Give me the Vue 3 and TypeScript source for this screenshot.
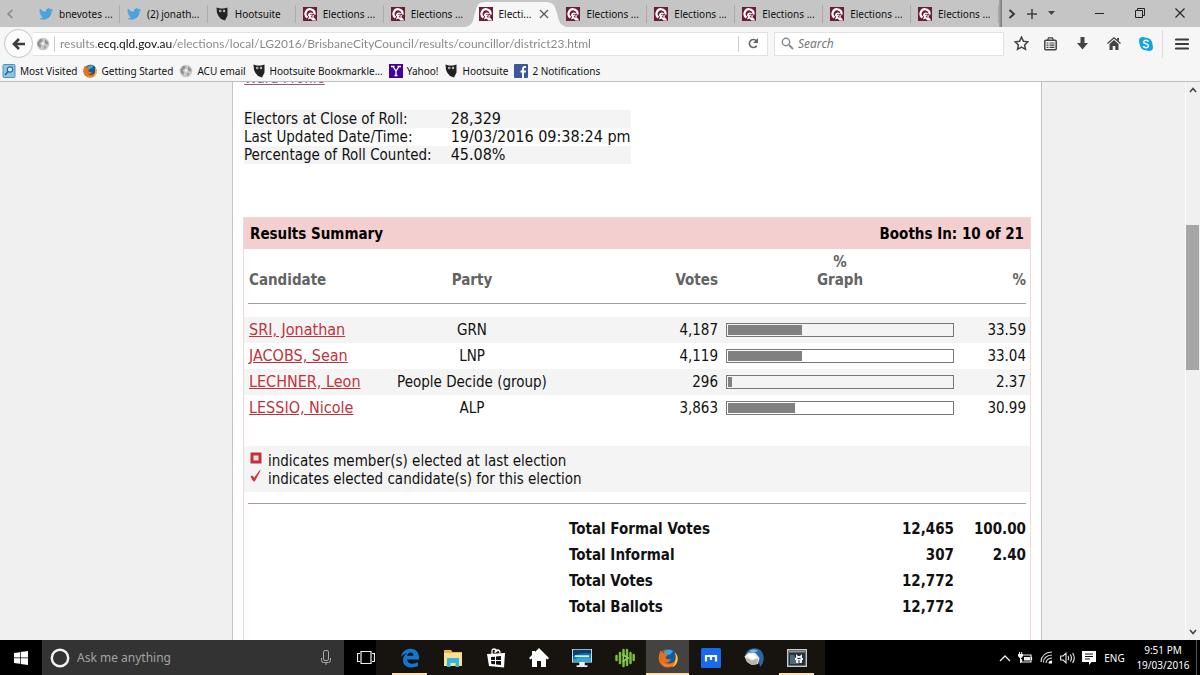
<script setup lang="ts">
import { ref } from 'vue'

interface Tab { title: string; icon: string; active?: boolean }
interface Bookmark { title: string; icon: string }
interface Candidate { name: string; party: string; votes: string; percent: number }
interface Total { label: string; votes: string; percent: string }
interface TaskApp { name: string; icon: string; running?: boolean; focused?: boolean }

const tabs: Tab[] = [
  { title: 'bnevotes ...', icon: 'twitter' },
  { title: '(2) jonath...', icon: 'twitter' },
  { title: 'Hootsuite', icon: 'owl' },
  { title: 'Elections ...', icon: 'ecq' },
  { title: 'Elections ...', icon: 'ecq' },
  { title: 'Electi...', icon: 'ecq', active: true },
  { title: 'Elections ...', icon: 'ecq' },
  { title: 'Elections ...', icon: 'ecq' },
  { title: 'Elections ...', icon: 'ecq' },
  { title: 'Elections ...', icon: 'ecq' },
  { title: 'Elections ...', icon: 'ecq' },
]

const bookmarks: Bookmark[] = [
  { title: 'Most Visited', icon: 'visited' },
  { title: 'Getting Started', icon: 'firefox' },
  { title: 'ACU email', icon: 'globe' },
  { title: 'Hootsuite Bookmarkle...', icon: 'owl' },
  { title: 'Yahoo!', icon: 'yahoo' },
  { title: 'Hootsuite', icon: 'owl' },
  { title: '2 Notifications', icon: 'facebook' },
]

const rollInfo: [string, string][] = [
  ['Electors at Close of Roll:', '28,329'],
  ['Last Updated Date/Time:', '19/03/2016 09:38:24 pm'],
  ['Percentage of Roll Counted:', '45.08%'],
]

const candidates: Candidate[] = [
  { name: 'SRI, Jonathan', party: 'GRN', votes: '4,187', percent: 33.59 },
  { name: 'JACOBS, Sean', party: 'LNP', votes: '4,119', percent: 33.04 },
  { name: 'LECHNER, Leon', party: 'People Decide (group)', votes: '296', percent: 2.37 },
  { name: 'LESSIO, Nicole', party: 'ALP', votes: '3,863', percent: 30.99 },
]

const totals: Total[] = [
  { label: 'Total Formal Votes', votes: '12,465', percent: '100.00' },
  { label: 'Total Informal', votes: '307', percent: '2.40' },
  { label: 'Total Votes', votes: '12,772', percent: '' },
  { label: 'Total Ballots', votes: '12,772', percent: '' },
]

const apps: TaskApp[] = [
  { name: 'Microsoft Edge', icon: 'edge', running: true },
  { name: 'File Explorer', icon: 'folder' },
  { name: 'Store', icon: 'store' },
  { name: 'Home', icon: 'house' },
  { name: 'Lenovo', icon: 'monitor' },
  { name: 'Audio', icon: 'wave' },
  { name: 'Firefox', icon: 'firefox', running: true, focused: true },
  { name: 'Maxthon', icon: 'maxthon' },
  { name: 'Thunderbird', icon: 'thunderbird' },
  { name: 'Viewer', icon: 'viewer', running: true },
]

const url = ref('results.ecq.qld.gov.au/elections/local/LG2016/BrisbaneCityCouncil/results/councillor/district23.html')
const query = ref('')
const ask = ref('')
const barWidth = (percent: number): string => `${Math.floor(percent)}%`
</script>

<template>
  <div class="desktop">
    <svg class="sprite" aria-hidden="true">
      <symbol id="twitter" viewBox="0 0 24 24">
        <path fill="#4aa3df" d="M24 4.6a10 10 0 0 1-2.8.8 5 5 0 0 0 2.1-2.7 10 10 0 0 1-3.1 1.2A4.9 4.9 0 0 0 11.800 8.400 14 14 0 0 1 1.700 3.200a4.900 4.900 0 0 0 1.500 6.600 5 5 0 0 1-2.200-.6c0 2.300 1.600 4.400 3.900 4.900a5 5 0 0 1-2.200.1 4.900 4.900 0 0 0 4.600 3.400A9.900 9.900 0 0 1 0 19.500 14 14 0 0 0 21.500 7.100 10 10 0 0 0 24 4.600z" />
      </symbol>
      <symbol id="owl" viewBox="0 0 14 14">
        <path fill="#222" d="M1.500.5 5 1.500h4l3.500-1V8.500L10 13.500 6 12 3.500 9 2 6z" />
        <circle cx="5.300" cy="4" r="1.200" fill="#ddd" /><circle cx="9" cy="4" r="1.200" fill="#ddd" />
        <circle cx="5.500" cy="4" r=".5" fill="#222" /><circle cx="8.900" cy="4" r=".5" fill="#222" />
      </symbol>
      <symbol id="ecq" viewBox="0 0 14 14">
        <rect width="14" height="14" fill="#6f1a35" />
        <path fill="none" stroke="#fff" stroke-width="2.200" d="M4.500 10.500A4.500 4.500 0 1 1 11.500 7.500" />
        <path fill="#fff" d="M5 8.500C5 5.500 8 4.800 10 6.300l-1 1.700 2.500.5-1 1.500 3 3.500H9.500L7.500 11.500 5 12.500l1-3z" />
        <path fill="none" stroke="#6f1a35" stroke-width=".8" d="M7 7.500q2-1 2.500.5L8 10h2.500" />
      </symbol>
      <symbol id="globe" viewBox="0 0 14 14">
        <circle cx="7" cy="7" r="6.300" fill="#c9c9c9" />
        <path fill="#929292" d="M4 2l3 .5-1 2-2.500 2L5 8l-.5 3L2 9 1.200 6zM9 2.500l2.500 2L12.500 7l-2 .5L9 6zM8 9l2.500.5L8.500 12.500z" />
        <path fill="#f4f4f4" d="M6.500 5 8.500 6 7.500 8 5.500 7z" />
      </symbol>
      <symbol id="visited" viewBox="0 0 14 14">
        <rect x="1" y=".5" width="12" height="13" rx="1" fill="#8fc4e8" stroke="#4c94c2" />
        <circle cx="8" cy="5.500" r="2.700" fill="#d9f0fc" stroke="#276c9f" stroke-width="1.200" />
        <path d="M6 7.500 3 11" stroke="#276c9f" stroke-width="1.600" />
      </symbol>
      <symbol id="firefox" viewBox="0 0 20 20">
        <circle cx="10" cy="10.300" r="9.400" fill="#e4601a" />
        <circle cx="11" cy="8.300" r="7.300" fill="#145a9e" />
        <path fill="#39a9dc" d="M5.500 4Q10 0 15 3L12.500 6.500 8 7z" />
        <path fill="#e8701d" d="M1 7 2.500 2.500 5 5 8 5.500 9.500 7.500 7.500 9 8.500 11 11.500 11.500 13 11c-1 3-4 4-6.500 3 3 3.500 9 2.500 11-2 1-2.500.5-5-.5-7.500C21 8 20 15 16 18L6 18.500 1 13z" />
        <path fill="#ffc23a" d="M17 4.500c3 3 3.500 7.500 1.500 11-1.200 2-2.700 3.200-4.500 3.800C17.500 15.500 18.500 10 17 4.500z" />
        <path fill="#f79a2c" d="M3 13c3 5 9 5.500 13 2-2 4-10 5.500-13-2z" />
      </symbol>
      <symbol id="yahoo" viewBox="0 0 14 14">
        <rect width="14" height="14" fill="#440099" />
        <path d="M2 2.500h3.500M8.500 2.500H12M4 2.500 7 7l3-4.500M7 7v4.500M5.500 11.500h3" fill="none" stroke="#fff" stroke-width="1.300" />
      </symbol>
      <symbol id="facebook" viewBox="0 0 14 14">
        <rect width="14" height="14" rx="1" fill="#3b5998" />
        <path d="M12 3H10.500Q9 3 9 5v9M6.500 7.500H12" fill="none" stroke="#fff" stroke-width="1.900" />
      </symbol>
      <symbol id="edge" viewBox="0 0 20 20">
        <path fill="#0f78d4" d="M1 9C2 3.500 6 .8 10.500.8 16 .8 19 4.500 19 9.500v2H7c.3 3 3 4.200 5.500 4.200 2 0 4-.6 5.500-1.600v4c-2 1-4.300 1.400-6.500 1.400C6 19.500 3 16.500 3 12.200c0-3 1.500-5.500 4.200-7C4.500 5.700 2.300 7 1 9zm6.200-1.300h6.200c0-2-1-3.200-2.900-3.200-1.800 0-3 1.200-3.300 3.200z" />
      </symbol>
      <symbol id="folder" viewBox="0 0 20 20">
        <path fill="#e8b84a" d="M1 2h7l1.500 2H19v14H1z" /><path fill="#fbe08f" d="M1 5h18v13H1z" />
        <path fill="#35b5e5" d="M4 10h12v9h-3.500v-4h-5v4H4z" />
      </symbol>
      <symbol id="store" viewBox="0 0 20 20">
        <path fill="none" stroke="#fff" stroke-width="1.300" d="M6 6V3q0-2 2-2t3 3M9 5q0-3 2.500-3T14 5" />
        <path fill="#fff" d="M1 6l18-1-1 14.500L3 18z" />
        <path fill="#111" d="M5 9l4-.3V12H5zM10 8.500l5-.4V12h-5zM5 13h4v3.300L5.300 16zM10 13h5v4l-5-.5z" />
      </symbol>
      <symbol id="house" viewBox="0 0 20 20">
        <path fill="#fff" d="M10 0l10 10-1.500 1.500L17 10.500V19h-5v-6H8v6H3v-8.500l-1.500 1L0 10l3-3V3h3v1z" />
      </symbol>
      <symbol id="monitor" viewBox="0 0 22 20">
        <path fill="#e7eef3" d="M0 0h22v15H0zM8 15h6v3H8zM5 18h12v2H5z" />
        <path fill="#0873ae" d="M1 1h20v13H1z" /><path fill="#0b3f69" d="M1 1h20v4Q10 3 1 8z" />
        <path fill="#d8effa" d="M3 7h16v2H3z" /><path fill="#38a4d3" d="M1 12q10-5 20-2v4H1z" />
      </symbol>
      <symbol id="wave" viewBox="0 0 20 20">
        <path fill="none" stroke="#79bd42" stroke-width="2.500" stroke-linecap="round" d="M1.500 8v4M5 5v10M8.500 2v5M8.500 13v5M12 2v6M12 12v5M15.500 5v10M18.700 7v5" />
        <path fill="#8bd34e" d="M7.500 5.500l7.500 4.500-7.500 4.500z" /><path fill="#182412" d="M9 8.500 11.500 10 9 11.500z" />
      </symbol>
      <symbol id="maxthon" viewBox="0 0 20 20">
        <rect width="20" height="20" rx="1.500" fill="#1769ed" />
        <path fill="none" stroke="#fff" stroke-width="2.200" d="M5 13.500V8h10v5.500M10 8v4" />
      </symbol>
      <symbol id="thunderbird" viewBox="0 0 20 20">
        <path fill="#2866a6" d="M3 3.500C7-1 15-.5 18 4c3 5 2 11-2 15 0-3-1-5-3-7L4 9 1 7z" />
        <path fill="#7fb8e2" d="M5 3c3-2 7-2 9 0L9 5z" />
        <path fill="#e9e7e3" d="M.5 8.500l4-4 7 .5 4 5-1.500 6-6 1-5-3z" /><path fill="#b8b5ae" d="M2 9.500l6 3 6-2-1 5.500-5 1-5-3z" />
        <path fill="#fff" d="M3 7.500l5-2 5 4-5 2z" />
      </symbol>
      <symbol id="viewer" viewBox="0 0 20 20">
        <rect x=".7" y="1.700" width="18.600" height="16.600" fill="#263238" stroke="#c9cdd0" stroke-width="1.400" />
        <path fill="#8a9499" d="M2 3h16v1.500H2z" /><path fill="#516a76" d="M3 7h4l5 9H3z" />
        <path fill="#e9edef" d="M9 6l2 2h2l2-2v4h1v2h-1v3H9v-3H8v-2h1z" /><path fill="#263238" d="M10.500 10h3v1h-3zM11.500 12h1v3h-1z" />
      </symbol>
    </svg>

    <header class="browser">
      <div class="tabbar">
        <button class="tab-scroll" aria-label="Scroll tabs left">
          <svg width="8" height="10" viewBox="0 0 8 10"><path d="M6.500 1 2 5l4.500 4" fill="none" stroke="#888" stroke-width="1.600" /></svg>
        </button>
        <nav class="tabs" aria-label="Tabs">
          <div v-for="(tab, i) in tabs" :key="i" class="tab" :class="{ active: tab.active }">
            <svg v-if="tab.active" class="tab-shape" viewBox="0 0 104 27" preserveAspectRatio="none">
              <path fill="#f6f6f6" d="M0 27C9 26 9 21 11 13S14 2 22 2h60c8 0 9 4 11 11s2 13 11 14z" />
            </svg>
            <button class="tab-title">
              <svg class="icon14"><use :href="'#' + tab.icon" /></svg>
              <span>{{ tab.title }}</span>
            </button>
            <button v-if="tab.active" class="tab-close" aria-label="Close tab">
              <svg width="10" height="10" viewBox="0 0 10 10"><path d="M1 1l8 8M9 1 1 9" stroke="#555" stroke-width="1.200" /></svg>
            </button>
          </div>
        </nav>
        <span class="tab-edge"></span>
        <div class="tab-tools">
          <button aria-label="Scroll tabs right"><svg width="8" height="10" viewBox="0 0 8 10"><path d="M1.500 1 6 5 1.500 9" fill="none" stroke="#333" stroke-width="1.800" /></svg></button>
          <button aria-label="New tab"><svg width="12" height="12" viewBox="0 0 12 12"><path d="M6 1v10M1 6h10" stroke="#444" stroke-width="1.600" /></svg></button>
          <button aria-label="List all tabs"><svg width="8" height="5" viewBox="0 0 8 5"><path d="M0 0h7L3.500 4z" fill="#444" /></svg></button>
        </div>
        <div class="window-tools">
          <button aria-label="Minimise"><svg width="10" height="10" viewBox="0 0 10 10"><path d="M0 5.500h9" stroke="#222" /></svg></button>
          <button aria-label="Restore"><svg width="10" height="10" viewBox="0 0 10 10"><path d="M.5 2.500h7v7h-7zM2.500 2V.5h7v7H8" fill="none" stroke="#222" /></svg></button>
          <button aria-label="Close"><svg width="10" height="10" viewBox="0 0 10 10"><path d="M.5.5l9 9M9.500.5l-9 9" stroke="#222" stroke-width="1.100" /></svg></button>
        </div>
      </div>

      <div class="toolbar">
        <button class="back" aria-label="Back">
          <svg width="14" height="12" viewBox="0 0 14 12"><path d="M7 1 2 6l5 5M2.500 6H13" fill="none" stroke="#3c3c3c" stroke-width="2.600" /></svg>
        </button>
        <div class="address">
          <svg class="icon14"><use href="#globe" /></svg>
          <input v-model="url" class="url" type="text" aria-label="Address" />
          <button class="reload" aria-label="Reload">
            <svg width="11" height="11" viewBox="0 0 11 11"><path d="M8.700 7.800A4 4 0 1 1 8.500 3" fill="none" stroke="#666" stroke-width="1.600" /><path d="M10 0v5H5z" fill="#666" /></svg>
          </button>
        </div>
        <div class="search">
          <svg width="13" height="13" viewBox="0 0 13 13"><circle cx="5" cy="5" r="3.700" fill="none" stroke="#888" stroke-width="1.400" /><path d="M8 8l4 4" stroke="#888" stroke-width="1.800" /></svg>
          <input v-model="query" type="text" placeholder="Search" aria-label="Search" />
        </div>
        <div class="tools">
          <button class="narrow" aria-label="Bookmark"><svg width="15" height="15" viewBox="0 0 14 14"><path d="M7 1l1.800 3.900 4.200.5-3.100 2.900.8 4.200L7 10.400l-3.700 2.100.8-4.200L1 5.400l4.200-.5z" fill="none" stroke="#444" stroke-width="1.400" /></svg></button>
          <button class="clip" aria-label="Bookmarks list"><svg width="13" height="14" viewBox="0 0 13 14"><rect x=".8" y="3.300" width="11.400" height="9.400" rx="1" fill="none" stroke="#444" stroke-width="1.500" /><path d="M3.700 3.300 4.500.8h4l.8 2.500" fill="none" stroke="#444" stroke-width="1.300" /><path d="M2.500 6h2M5.500 6h5M2.500 8.200h2M5.500 8.200h5M2.500 10.400h2M5.500 10.400h5" stroke="#444" stroke-width="1.200" /></svg></button>
          <button aria-label="Downloads"><svg width="13" height="13" viewBox="0 0 13 13"><path d="M4.500 0h4v6H12l-5.500 6.500L1 6h3.500z" fill="#444" /></svg></button>
          <button aria-label="Home"><svg width="14" height="13" viewBox="0 0 14 13"><path d="M.5 6.500 7 .8l6.500 5.700" fill="none" stroke="#444" stroke-width="1.300" /><path d="M2.500 7 7 3l4.500 4v6H8.300V9H5.700v4H2.500zM10 1h2v3l-2-1.500z" fill="#444" /></svg></button>
          <button aria-label="Skype"><svg width="14" height="14" viewBox="0 0 14 14"><circle cx="7" cy="7" r="6.300" fill="#10a5e6" /><circle cx="4" cy="4" r="4" fill="#10a5e6" /><circle cx="10" cy="10" r="4" fill="#10a5e6" /><path d="M9.500 4.700Q8.800 3.300 7 3.300T4.700 5Q4.700 6.400 7 6.800T9.500 9Q9.300 10.700 7 10.700T4.400 9" fill="none" stroke="#fff" stroke-width="1.500" /></svg></button>
          <button class="menu" aria-label="Menu"><svg width="14" height="12" viewBox="0 0 14 12"><path d="M1 1.500h12M1 6h12M1 10.500h12" stroke="#3c3c3c" stroke-width="2.200" stroke-linecap="round" /></svg></button>
        </div>
      </div>

      <nav class="bookmarks" aria-label="Bookmarks">
        <a v-for="(mark, i) in bookmarks" :key="i" href="#">
          <svg class="icon14"><use :href="'#' + mark.icon" /></svg>
          <span>{{ mark.title }}</span>
        </a>
      </nav>
    </header>

    <div class="viewport">
      <main class="sheet">
        <div class="sheet-body">
          <a class="ward" href="#">Ward Profile</a>

          <table class="roll">
            <tbody>
              <tr v-for="[label, value] in rollInfo" :key="label">
                <th scope="row">{{ label }}</th>
                <td>{{ value }}</td>
              </tr>
            </tbody>
          </table>

          <section class="results">
            <header class="results-head">
              <h2>Results Summary</h2>
              <strong>Booths In: 10 of 21</strong>
            </header>
            <table class="candidates">
              <colgroup><col class="c-name" /><col class="c-party" /><col class="c-votes" /><col class="c-graph" /><col class="c-pct" /></colgroup>
              <thead>
                <tr><th class="left">Candidate</th><th>Party</th><th class="right">Votes</th><th>%<br />Graph</th><th class="right">%</th></tr>
              </thead>
              <tbody>
                <tr class="rule"><td colspan="5"><hr /></td></tr>
                <tr v-for="person in candidates" :key="person.name" class="person">
                  <td class="left"><a href="#">{{ person.name }}</a></td>
                  <td class="center">{{ person.party }}</td>
                  <td class="right">{{ person.votes }}</td>
                  <td><div class="bar"><div class="fill" :style="{ width: barWidth(person.percent) }"></div></div></td>
                  <td class="right">{{ person.percent.toFixed(2) }}</td>
                </tr>
              </tbody>
            </table>
            <div class="legend">
              <p><svg width="12" height="12" viewBox="0 0 12 12"><rect x="2" y="2" width="8" height="8" fill="#f7dede" stroke="#c1323c" stroke-width="3" /></svg>indicates member(s) elected at last election</p>
              <p><svg width="12" height="12" viewBox="0 0 12 12"><path d="M1 6.500 2.500 6 4 8.500 10 .5 4.500 11H3.500z" fill="#d0323e" stroke="#d0323e" /></svg>indicates elected candidate(s) for this election</p>
            </div>
            <hr class="divider" />
            <table class="totals">
              <colgroup><col /><col class="t-label" /><col class="t-votes" /><col class="c-pct" /></colgroup>
              <tbody>
                <tr v-for="total in totals" :key="total.label">
                  <td></td>
                  <th scope="row">{{ total.label }}</th>
                  <td>{{ total.votes }}</td>
                  <td>{{ total.percent }}</td>
                </tr>
              </tbody>
            </table>
          </section>
        </div>
      </main>
      <div class="scrollbar">
        <button aria-label="Scroll up"><svg width="8" height="6" viewBox="0 0 8 6"><path d="M1 5l3-3.500L7 5" fill="none" stroke="#444" stroke-width="1.600" /></svg></button>
        <div class="track"><span class="gap"></span><span class="thumb"></span><span class="rest"></span></div>
        <button aria-label="Scroll down"><svg width="8" height="6" viewBox="0 0 8 6"><path d="M1 1l3 3.500L7 1" fill="none" stroke="#444" stroke-width="1.600" /></svg></button>
      </div>
    </div>

    <footer class="taskbar">
      <button class="start" aria-label="Start">
        <svg width="14" height="14" viewBox="0 0 14 14"><path fill="#fff" d="M0 2l6-.8v5.400H0zM6.700 1.100 14 0v6.600H6.700zM0 7.300h6v5.400L0 12zM6.700 7.300H14V14l-7.300-1.100z" /></svg>
      </button>
      <div class="cortana">
        <svg width="20" height="20" viewBox="0 0 20 20"><circle cx="10" cy="10" r="8.200" fill="none" stroke="#f4f4f4" stroke-width="2.400" /></svg>
        <input v-model="ask" type="text" placeholder="Ask me anything" aria-label="Ask me anything" />
        <button aria-label="Voice"><svg width="12" height="16" viewBox="0 0 12 16"><rect x="3.500" y=".5" width="5" height="10" rx="1.500" fill="none" stroke="#aaa" /><path d="M1.500 8v2.500q0 2 2 2h5q2 0 2-2V8M6 12.500V15" fill="none" stroke="#aaa" /></svg></button>
      </div>
      <button class="taskview" aria-label="Task view">
        <svg width="18" height="13" viewBox="0 0 18 13"><path d="M4 .5h10v12H4zM3 2.500H.5v8H3M15 2.500h2.500v8H15" fill="none" stroke="#eee" stroke-width="1.200" /></svg>
      </button>
      <div class="apps">
        <button v-for="app in apps" :key="app.name" :class="{ running: app.running, focused: app.focused }" :aria-label="app.name">
          <svg class="icon20"><use :href="'#' + app.icon" /></svg>
        </button>
      </div>
      <div class="tray">
        <button aria-label="Show hidden icons"><svg width="12" height="8" viewBox="0 0 12 8"><path d="M1 7l5-5 5 5" fill="none" stroke="#eee" stroke-width="1.300" /></svg></button>
        <button aria-label="Power"><svg width="15" height="12" viewBox="0 0 15 12"><path d="M5 3h8v7H3.500V7M13.500 5v3" fill="none" stroke="#eee" stroke-width="1.200" /><path d="M6 5h6v3.500H6zM0 2h5v2L3.500 6H1.500L0 4zM1 0h1v2H1zM3.200 0h1v2h-1zM2 6h1v5H2z" fill="#eee" /></svg></button>
        <button aria-label="Network"><svg width="13" height="13" viewBox="0 0 13 13"><path d="M1 11Q1.500 1.500 12 1M3.300 11.500Q4 4.500 12 4M6 12Q6.500 7.300 12 7" fill="none" stroke="#ddd" stroke-width="1.200" /><path d="M8.500 12.500Q8.500 9.500 12 9.500v3z" fill="#fff" /></svg></button>
        <button aria-label="Volume"><svg width="16" height="12" viewBox="0 0 16 12"><path d="M.6 4h2.500L6 1.200v9.600L3.100 8H.6zM8 4q1.300 2 0 4M10.300 2.500q2.300 3.500 0 7M12.600 1q3.300 5 0 10" fill="none" stroke="#eee" stroke-width="1.100" /></svg></button>
        <button aria-label="Notifications"><svg width="14" height="14" viewBox="0 0 14 14"><path d="M0 0h14v11H9.500L7 14v-3H0z" fill="#fff" /><path d="M3 3h8M3 5.500h8M3 8h5" stroke="#111" /></svg></button>
        <button class="lang">ENG</button>
        <button class="clock"><time>9:51 PM</time><span>19/03/2016</span></button>
        <span class="show-desktop"></span>
      </div>
    </footer>
  </div>
</template>

<style>
html, body { margin: 0; overflow: hidden; }
</style>

<style scoped>
* { box-sizing: border-box; }
.desktop { display: flex; flex-direction: column; height: 100vh; background: #f0f0f0; font: 10px/16px "Noto Sans", "Open Sans", sans-serif; color: #111; }
.sprite { display: none; }
button { border: 0; padding: 0; margin: 0; background: none; font: inherit; color: inherit; display: flex; align-items: center; justify-content: center; }
input { border: 0; padding: 0; margin: 0; background: none; outline: 0; font: inherit; min-width: 0; }
.icon14 { width: 14px; height: 14px; flex: none; }
.icon20 { width: 20px; height: 20px; flex: none; }

.browser { flex: none; background: #f6f6f6; border-bottom: 1px solid #bcbcbc; }
.tabbar { display: flex; height: 27px; background: #c5c5c5; }
.tab-scroll { width: 19px; margin-right: 13px; }
.tabs { display: flex; flex: 1; min-width: 0; }
.tab { position: relative; display: flex; flex: 1; min-width: 0; align-items: center; padding-left: 7px; }
.tab:not(.active)::after { content: ""; position: absolute; right: 0; top: 5px; bottom: 4px; width: 1px; background: #aaa; }
.tab:has(+ .active)::after { display: none; }
.tab-title { position: relative; gap: 6px; white-space: nowrap; }
.tab-shape { position: absolute; left: -8px; top: 0; width: calc(100% + 16px); height: 27px; }
.tab-close { position: relative; margin: 0 10px 0 auto; }
.tab-edge { width: 3px; background: linear-gradient(90deg, #aaa, #777); }
.tab-tools { display: flex; }
.tab-tools button { width: 20px; }
.window-tools { display: flex; margin-left: 18px; }
.window-tools button { width: 40px; padding-bottom: 2px; }

.toolbar { display: flex; align-items: center; height: 33px; padding-left: 4px; }
.back { width: 29px; height: 29px; border: 1px solid #c4c4c4; border-radius: 50%; background: #fcfcfc; }
.address { display: flex; flex: 1; align-items: center; height: 24px; background: #fff; border: 1px solid #e2e2e2; border-left: 0; padding-left: 3px; }
.url { flex: 1; margin-left: 4px; padding-left: 5px; height: 16px; border-left: 1px solid #ccc; font: 12px/16px Lato, "Open Sans", sans-serif; color: transparent; background: linear-gradient(90deg, #858585 42px, #111 42px 117px, #858585 117px); background-clip: text; -webkit-background-clip: text; }
.reload { width: 29px; height: 16px; border-left: 1px solid #ccc; }
.search { display: flex; flex: 0 1 230px; align-items: center; gap: 4px; height: 24px; margin-left: 6px; padding-left: 6px; background: #fff; border: 1px solid #e2e2e2; }
.search input { flex: 1; font: italic 12px/16px "Noto Sans", sans-serif; }
.search input::placeholder { color: #777; opacity: 1; }
.tools { display: flex; align-items: center; margin-left: 4px; }
.tools button { width: 32px; height: 28px; }
.tools .narrow { width: 27px; }
.tools .clip { width: 31px; }
.tools .menu { width: 38px; border-left: 1px solid #dcdcdc; }

.bookmarks { display: flex; align-items: center; gap: 6px; height: 21px; padding-left: 2px; }
.bookmarks a { display: flex; align-items: center; gap: 4px; color: #111; text-decoration: none; white-space: nowrap; }

.viewport { display: flex; flex: 1; min-height: 0; overflow: hidden; }
.sheet { flex: 1; margin: 0 143px 0 232px; background: #fff; border: solid #c4c4c4; border-width: 0 1px; min-width: 0; }
.sheet-body { margin-top: -13px; padding: 0 10px; font: 15px/18px "DejaVu Sans Condensed", "DejaVu Sans", sans-serif; color: #111; }
.ward { display: block; width: max-content; margin-left: 1px; color: #8d5a80; }
.roll { margin: 23px 0 0 1px; border-collapse: collapse; }
.roll th { padding: 0 19px 0 0; text-align: left; font-weight: 400; }
.roll td { padding: 0; font-size: 16px; }
.roll tr:nth-child(odd) { background: #f4f4f4; }
.results { margin-top: 53px; border: 1px solid #f4d8d8; border-bottom: 0; height: 440px; }
.results-head { display: flex; align-items: center; justify-content: space-between; height: 31px; padding: 0 6px; background: #f4cfcf; color: #000; }
h2, .results-head strong { margin: 0; font-size: 15px; font-weight: 700; }
table.candidates, .totals { width: 100%; table-layout: fixed; border-collapse: collapse; }
.candidates th, .candidates td { padding: 0 4px; }
.candidates th { height: 40px; vertical-align: bottom; color: #636363; }
.c-name { width: 132px; }
.c-votes { width: 154px; }
.c-graph { width: 236px; }
.c-pct { width: 72px; }
.candidates .left { text-align: left; padding-left: 5px; }
.center { text-align: center; }
.candidates .right { text-align: right; }
.rule td { height: 28px; }
hr { margin: 0; border: 0; height: 1px; background: #a0a0a0; }
.person { height: 26px; }
.person:nth-child(even) { background: #f4f4f4; }
.person a { color: #c1323c; font-size: 16px; }
.bar { height: 14px; border: 1px solid #777; padding: 1px; }
.fill { height: 10px; background: #808080; }
.legend { margin-top: 25px; padding: 6px 6px 4px; background: #f4f4f4; }
.legend p { display: flex; align-items: flex-start; gap: 6px; margin: 0; }
.divider { margin: 11px 4px 12px; }
.t-label { width: 259px; }
.t-votes { width: 130px; }
.totals tr { height: 26px; }
.totals th { padding: 0; text-align: left; }
.totals td { padding: 0 4px; text-align: right; font-weight: 700; }

.scrollbar { display: flex; flex-direction: column; flex: none; width: 15px; border-left: 1px solid #fafafa; }
.scrollbar button { height: 16px; }
.track { display: flex; flex: 1; flex-direction: column; align-items: stretch; }
.gap { flex: 127; }
.thumb { flex: 145; margin-right: 1px; background: #a6a6a6; }
.rest { flex: 254; }

.taskbar { display: flex; flex: none; height: 35px; background: #000; color: #fff; }
.start { width: 42px; }
.cortana { display: flex; align-items: center; width: 302px; padding: 0 12px 0 8px; background: #333; }
.cortana input { flex: 1; margin-left: 7px; font: 12px/16px "Noto Sans", sans-serif; color: #fff; }
.cortana input::placeholder { color: #a3a3a3; opacity: 1; }
.taskview { width: 43px; }
.apps { display: flex; margin-left: -11px; padding: 0 7px 0 12px; background: #17130f; }
.apps button { width: 43px; position: relative; }
.apps .focused { background: #454341; }
.apps .running::after { content: ""; position: absolute; left: 4px; right: 4px; bottom: 0; height: 2px; background: #f6e3b4; }
.apps .focused::after { left: 0; right: 0; }
.tray { display: flex; align-items: center; margin-left: auto; height: 100%; }
.tray button { width: 21px; height: 100%; }
.tray .lang { width: 31px; }
.tray .clock { width: 66px; flex-direction: column; line-height: 15px; }
.show-desktop { width: 4px; height: 100%; border-left: 1px solid #555; }
</style>
